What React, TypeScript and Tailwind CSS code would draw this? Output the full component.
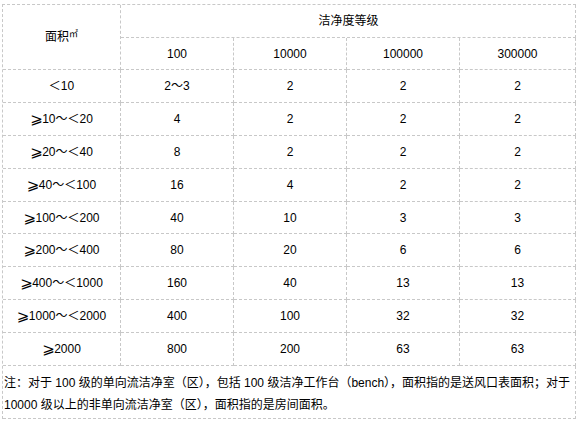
import React from "react";

const rows: string[][] = [
  ["＜10", "2～3", "2", "2", "2"],
  ["⩾10～＜20", "4", "2", "2", "2"],
  ["⩾20～＜40", "8", "2", "2", "2"],
  ["⩾40～＜100", "16", "4", "2", "2"],
  ["⩾100～＜200", "40", "10", "3", "3"],
  ["⩾200～＜400", "80", "20", "6", "6"],
  ["⩾400～＜1000", "160", "40", "13", "13"],
  ["⩾1000～＜2000", "400", "100", "32", "32"],
  ["⩾2000", "800", "200", "63", "63"],
];

const cell =
  "flex items-center justify-center border-r border-b border-dashed border-[#c8c8c8]";

function Label({ text }: { text: string }) {
  if (!text.startsWith("⩾")) return <>{text}</>;
  return (
    <>
      <span className="text-[15px] leading-[12px] inline-block w-[12px] text-center" style={{ fontFamily: '"DejaVu Sans", sans-serif' }}>
        ⩾
      </span>
      {text.slice(1)}
    </>
  );
}

export default function App() {
  return (
    <div
      className="w-[582px] h-[424px] bg-white pt-[4px] pl-[2px] text-[12px] text-black"
      style={{ fontFamily: '"Liberation Sans", "DejaVu Sans", "Noto Sans CJK SC", sans-serif' }}
    >
      <div className="grid w-[574px] grid-cols-[118px_113px_113px_113px_116px] grid-rows-[33px_32px_33px_33px_33px_33px_32px_33px_33px_33px_33px_53px] border-l border-t border-dashed border-[#c8c8c8]">
        <div className={`${cell} row-span-2`}>
          <span>
            面积<span className="text-[9px] align-top">㎡</span>
          </span>
        </div>
        <div className={`${cell} col-span-4 pl-[1px]`}>洁净度等级</div>
        <div className={cell}>100</div>
        <div className={cell}>10000</div>
        <div className={cell}>100000</div>
        <div className={cell}>300000</div>
        {rows.map((r, i) =>
          r.map((c, j) => (
            <div key={`${i}-${j}`} className={cell}>
              <Label text={c} />
            </div>
          ))
        )}
        <div className="col-span-5 border-r border-b border-dashed border-[#c8c8c8] pl-[1px] pt-[6px] leading-[22px] whitespace-nowrap">
          注：对于 100 级的单向流洁净室（区），包括 100 级洁净工作台（bench），面积指的是送风口表面积；对于
          <br />
          10000 级以上的非单向流洁净室（区），面积指的是房间面积。
        </div>
      </div>
    </div>
  );
}
